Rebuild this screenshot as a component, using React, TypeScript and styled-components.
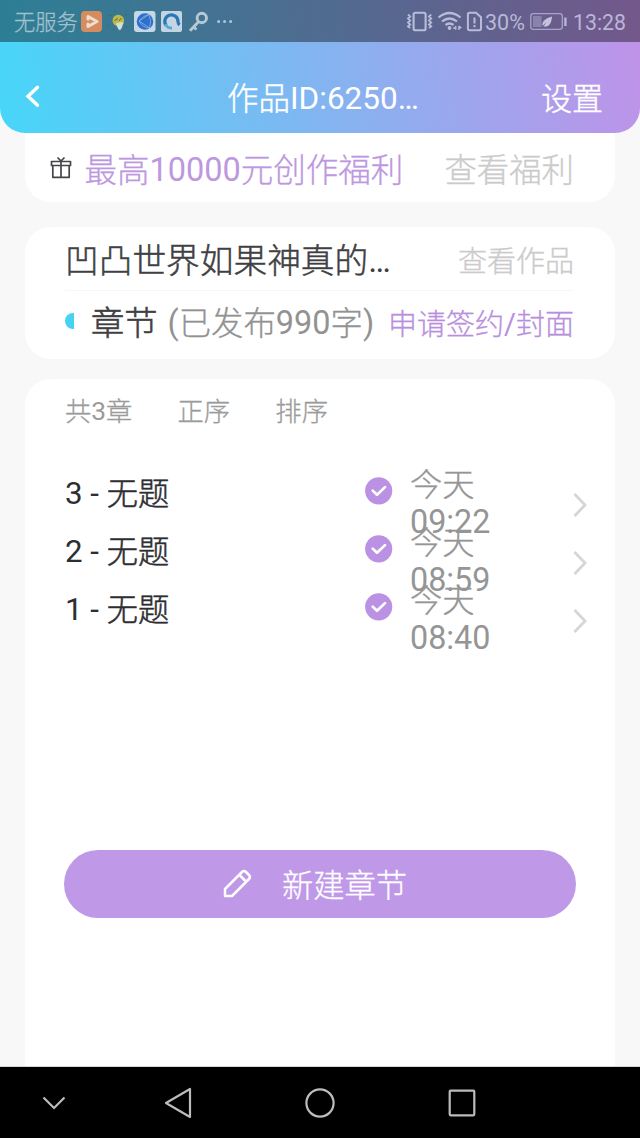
import React from 'react';
import styled, { createGlobalStyle } from 'styled-components';

const GlobalStyle = createGlobalStyle`
  * { box-sizing: border-box; }
  body {
    margin: 0;
    background: #f8f8f8;
    font-family: Roboto, 'Noto Sans CJK SC', sans-serif;
    font-weight: 300;
  }
  svg { display: block; flex: none; }
`;

const Screen = styled.div`
  width: 640px;
  height: 1138px;
  display: flex;
  flex-direction: column;
  overflow: hidden;
  background: #f8f8f8;
`;

const Label = styled.span<{ $size: number; $color: string; $stroke?: number; $line?: number; $drop?: number; $indent?: number }>`
  font-size: ${p => p.$size}px;
  line-height: ${p => p.$line ?? 40}px;
  color: ${p => p.$color};
  padding-top: ${p => p.$drop ?? 0}px;
  margin-left: ${p => p.$indent ?? 0}px;
  -webkit-text-stroke: ${p => p.$stroke ?? 0.3}px currentColor;
  white-space: nowrap;
  flex: none;
`;

const Latin = styled.span`
  font-weight: 400;
  line-height: 0;
  vertical-align: 1px;
  -webkit-text-stroke: 0;
`;

// Latin runs use the regular weight, Chinese runs a slightly thickened light weight.
const mixRuns = (text: string) =>
  text
    .split(/([\x20-\x7e…]+)/)
    .filter(Boolean)
    .map((run, i) => (/^[\x20-\x7e…]/.test(run) ? <Latin key={i}>{run}</Latin> : run));

type TextProps = React.ComponentProps<typeof Label> & { children: string };
const Text = ({ children, ...rest }: TextProps) => <Label {...rest}>{mixRuns(children)}</Label>;

const Header = styled.header`
  height: 133px;
  flex: none;
  border-radius: 0 0 25px 25px;
  overflow: hidden;
  background: linear-gradient(80deg, #47d6f9, #c092e8);
`;

const StatusBar = styled.div`
  height: 42px;
  padding: 0 14px;
  display: flex;
  align-items: center;
  justify-content: space-between;
  background: rgba(0, 0, 0, 0.4);
`;

const StatusGroup = styled.div`
  display: flex;
  align-items: center;
`;

const TitleBar = styled.div`
  height: 91px;
  display: grid;
  grid-template-columns: 227px 1fr 99px;
  align-items: center;
  padding-top: 20px;
`;

const BackButton = styled.button`
  border: 0;
  background: none;
  padding: 0 0 4px 25px;
`;

const Card = styled.section`
  margin: 0 25px;
  background: #fff;
  flex: none;
`;

const BenefitCard = styled(Card)`
  height: 68.5px;
  padding: 4px 41px 0 25px;
  border-radius: 0 0 26px 26px;
  display: flex;
  align-items: center;
`;

const WorkCard = styled(Card)`
  height: 132px;
  margin-top: 25px;
  padding: 0 41px 0 40px;
  border-radius: 26px;
`;

const WorkRow = styled.div<{ $height: number }>`
  height: ${p => p.$height}px;
  display: flex;
  align-items: center;
`;

const Divider = styled.div`
  height: 1px;
  background: #f7f7f7;
`;

const Spacer = styled.div`
  flex: 1;
`;

const HalfDot = styled.i`
  width: 9px;
  height: 16px;
  margin: 0 17px 3px 0;
  border-radius: 8px 0 0 8px;
  background: #45d3f1;
`;

const ChapterCard = styled(Card)`
  height: 687.5px;
  margin-top: 20px;
  padding: 13.5px 25px 0 40px;
  border-radius: 26px 26px 0 0;
`;

const SortBar = styled.div`
  display: flex;
  gap: 45.2px;
  margin-bottom: 34px;
`;

const ChapterRow = styled.div`
  height: 58px;
  display: grid;
  grid-template-columns: 300px 45px 1fr 18.5px;
  align-items: start;
`;

const CheckCell = styled.div`
  padding-top: 11px;
`;

const ArrowCell = styled.div`
  padding-top: 25.5px;
`;

const Time = styled.span`
  width: 90px;
  font-size: 32.3px;
  line-height: 37px;
  padding-top: 1px;
  color: #959595;
  -webkit-text-stroke: 0.3px currentColor;
  ${Latin} { vertical-align: 0; }
`;

const CreateButton = styled.button`
  width: 512px;
  height: 68px;
  margin: 210px 0 0 -1px;
  padding: 0 11px 0 0;
  border: 0;
  border-radius: 34px;
  background: #bf98e8;
  font-family: inherit;
  font-weight: 300;
  display: flex;
  align-items: center;
  justify-content: center;
  gap: 30px;
`;

const NavBar = styled.nav`
  height: 72px;
  flex: none;
  background: #000;
  border-top: 1px solid #d4d4d4;
  display: flex;
  align-items: center;
`;

const NavItem = styled.div<{ $width: number }>`
  width: ${p => p.$width}px;
  display: flex;
  justify-content: center;
`;

const StatusIcons = () => (
  <svg width="160" height="42" viewBox="78 0 160 42" fill="none">
    <rect x="81" y="11" width="21" height="21" rx="4" fill="#d58d60" />
    <path d="M88 19V16.500L97 21.500L88 26.500V24" stroke="#f1ddcf" strokeWidth="3" strokeLinejoin="round" strokeLinecap="round" />
    <circle cx="118.300" cy="20.500" r="5.800" fill="#bfb94a" />
    <path d="M114.500 20.500L118 18.500M119 21L121.500 18" stroke="#5d6c3c" />
    <path d="M116 23.500C119 22.500 122 21.500 123.500 23C122.500 25 122 29 119.700 30.300C117.500 29 117 26 116 23.500Z" fill="#d7ded4" />
    <path d="M108.500 25.500h1M110 15.500h1M115 11.500h1M125 15h1M113 29.500h1M126 27h1" stroke="#415d55" />
    <rect x="134" y="11" width="21.500" height="21" rx="3" fill="#c5d8e6" />
    <circle cx="145" cy="21.500" r="8.300" fill="#2e70cb" />
    <path d="M139 21L149 14.500M139 21L149.500 28M149 14.500Q152 21 149.500 28M139 21Q144 15 149 14.500M139 21Q143 28 149.500 28" stroke="#a9c8e9" strokeWidth=".6" />
    <rect x="161" y="11" width="21" height="21" rx="2" fill="#c3d5e2" />
    <path d="M166.200 25.500A6.600 6.600 0 1 1 178 21.500Q178 23.500 179.500 25" stroke="#2978b5" strokeWidth="3.200" />
    <path d="M165.500 24A6.600 6.600 0 0 0 172 28" stroke="#55a8d5" strokeWidth="2.800" />
    <circle cx="201.800" cy="18" r="4.700" stroke="#b5cad5" strokeWidth="2.900" />
    <path d="M198.500 21.800L190 30.800M193.500 27L196.500 29.500" stroke="#b5cad5" strokeWidth="2.900" />
    <g fill="#aec6d5">
      <circle cx="218.600" cy="21.600" r="1.500" />
      <circle cx="224.600" cy="21.600" r="1.500" />
      <circle cx="230.600" cy="21.600" r="1.500" />
    </g>
  </svg>
);

const SignalIcons = () => (
  <svg width="80" height="42" viewBox="405 0 80 42" fill="none" stroke="#b7bcd9">
    <rect x="413.600" y="12.700" width="12" height="17.500" rx="1.800" strokeWidth="2.100" />
    <path d="M408 14.500l2.200 2-2.200 2 2.200 2-2.200 2 2.200 2-2.200 2 2.200 1.500M431.200 14.500l-2.200 2 2.200 2-2.200 2 2.200 2-2.200 2 2.200 2-2.200 1.500" strokeWidth="1.800" />
    <path d="M438.500 17.500Q449.500 8.500 460.500 17.500M442 21.500Q449.500 15.500 457 21.500M445.500 25Q449.500 22 453.500 25" strokeWidth="2.200" />
    <circle cx="449.500" cy="28" r="1.900" fill="#b7bcd9" stroke="none" />
    <path d="M455.800 26v4M458.800 26v4" strokeWidth="1.200" />
    <path d="M452.500 28.500l3-2.500v3zM462 27.500l-3-2v4z" fill="#b7bcd9" stroke="none" />
    <path d="M469.500 12.800H476L481 17.300V28.500Q481 30.200 479.300 30.200H469.500Q467.900 30.200 467.900 28.500V14.500Q467.900 12.800 469.500 12.800Z" strokeWidth="2" />
    <path d="M474.500 17.500v6M474.500 25v2.200" strokeWidth="2" />
  </svg>
);

const BatteryIcon = () => (
  <svg width="48" height="42" viewBox="525 0 48 42" fill="none">
    <rect x="530.800" y="13.700" width="31.500" height="15.600" rx="2.500" stroke="#a9a5c8" strokeWidth="1.300" />
    <rect x="533" y="16" width="8.500" height="11" fill="#8983ad" />
    <path d="M565.400 17.500v8.500" stroke="#bab5d8" strokeWidth="2.400" />
    <path d="M552 16.500C546 18.500 541.800 20.500 542.500 26L546.500 22L543.500 26.500C550 27.500 551.500 22 552 16.500Z" fill="#c7c3df" />
  </svg>
);

const GiftIcon = () => (
  <svg width="22" height="26" viewBox="0 0 22 26" fill="none" stroke="#45454a" strokeWidth="1.700">
    <path d="M1.500 5.500H20.500V9.500H1.500ZM2.800 9.500V21.300H19.200V9.500M11 5.500V21.300M7.500 1.500L11 5L14.500 1.500" strokeLinejoin="round" />
  </svg>
);

const CheckIcon = () => (
  <svg width="28" height="28" viewBox="0 0 28 28" fill="none">
    <circle cx="13.700" cy="13.800" r="13.600" fill="#bb91e4" />
    <path d="M7.700 13.600L12 17.800L20 10.100" stroke="#fff" strokeWidth="2.700" strokeLinecap="round" strokeLinejoin="round" />
  </svg>
);

const chapters = [
  { id: 3, title: '无题', time: '09:22' },
  { id: 2, title: '无题', time: '08:59' },
  { id: 1, title: '无题', time: '08:40' },
];

export default function App() {
  return (
    <>
      <GlobalStyle />
      <Screen>
        <Header>
          <StatusBar>
            <StatusGroup>
              <Text $size={21.3} $color="#a3c1cd" $drop={4}>无服务</Text>
              <StatusIcons />
            </StatusGroup>
            <StatusGroup>
              <SignalIcons />
              <Text $size={21.5} $color="#b7b9d7" $drop={5}>30%</Text>
              <BatteryIcon />
              <Text $size={21.3} $color="#bdb5d8" $drop={5}>13:28</Text>
            </StatusGroup>
          </StatusBar>
          <TitleBar>
            <BackButton aria-label="返回">
              <svg width="16" height="24" viewBox="0 0 16 24" fill="none">
                <path d="M12.500 3.200L3 12.200L12.500 21.200" stroke="#fff" strokeWidth="3.400" strokeLinecap="round" />
              </svg>
            </BackButton>
            <Text $size={31.5} $color="#fff" $stroke={0.4} $drop={4}>作品ID:6250…</Text>
            <Text $size={31} $color="#fff" $stroke={0.4} $drop={4}>设置</Text>
          </TitleBar>
        </Header>

        <BenefitCard>
          <GiftIcon />
          <Text $size={32.5} $color="#bd97df" $indent={12.5} $drop={4}>最高10000元创作福利</Text>
          <Spacer />
          <Text $size={32.4} $color="#cbcbcb" $drop={4}>查看福利</Text>
        </BenefitCard>

        <WorkCard>
          <WorkRow $height={63}>
            <Text $size={33.7} $color="#3f3f44" $stroke={0.5} $drop={8}>凹凸世界如果神真的…</Text>
            <Spacer />
            <Text $size={29} $color="#cbcbcb" $drop={7}>查看作品</Text>
          </WorkRow>
          <Divider />
          <WorkRow $height={64}>
            <HalfDot />
            <Text $size={33.3} $color="#3f3f44" $stroke={0.6} $drop={3}>章节</Text>
            <Text $size={32.4} $color="#929292" $indent={10} $drop={3}>(已发布990字)</Text>
            <Spacer />
            <Text $size={29} $color="#b98fdd" $drop={4}>申请签约/封面</Text>
          </WorkRow>
        </WorkCard>

        <ChapterCard>
          <SortBar>
            <Text $size={26.3} $color="#9b9b9b">共3章</Text>
            <Text $size={26.3} $color="#9b9b9b">正序</Text>
            <Text $size={26.3} $color="#9b9b9b">排序</Text>
          </SortBar>
          {chapters.map(chapter => (
            <ChapterRow key={chapter.id}>
              <Text $size={31.3} $color="#2d2e33" $stroke={0.5} $line={54} $drop={1.5}>{`${chapter.id} - ${chapter.title}`}</Text>
              <CheckCell><CheckIcon /></CheckCell>
              <Time>{mixRuns(`今天 ${chapter.time}`)}</Time>
              <ArrowCell>
                <svg width="18" height="26" viewBox="0 0 18 26" fill="none">
                  <path d="M2.500 2L13 13L2.500 24" stroke="#d6d6d6" strokeWidth="2.800" />
                </svg>
              </ArrowCell>
            </ChapterRow>
          ))}
          <CreateButton>
            <svg width="30" height="30" viewBox="0 0 30 30" fill="none" stroke="#fff" strokeWidth="2.500" strokeLinejoin="round">
              <path d="M3 27V20L20 3Q22 1 24 3L27 6Q29 8 27 10L10 27ZM17.500 6L24 12.500" />
            </svg>
            <Text $size={31.3} $color="#fff" $drop={5}>新建章节</Text>
          </CreateButton>
        </ChapterCard>

        <NavBar>
          <NavItem $width={107}>
            <svg width="24" height="14" viewBox="0 0 24 14" fill="none" stroke="#bcbcbc" strokeWidth="2.200">
              <path d="M1.500 1.500L12 12L22.500 1.500" />
            </svg>
          </NavItem>
          <NavItem $width={142}>
            <svg width="28" height="32" viewBox="0 0 28 32" fill="none" stroke="#bcbcbc" strokeWidth="2.200" strokeLinejoin="round">
              <path d="M26 2V30L2 16Z" />
            </svg>
          </NavItem>
          <NavItem $width={142}>
            <svg width="30" height="30" viewBox="0 0 30 30" fill="none" stroke="#bcbcbc" strokeWidth="2.200">
              <circle cx="15" cy="15" r="13.600" />
            </svg>
          </NavItem>
          <NavItem $width={142}>
            <svg width="28" height="28" viewBox="0 0 28 28" fill="none" stroke="#bcbcbc" strokeWidth="2.200">
              <rect x="1.700" y="1.700" width="24.600" height="24.600" rx="1" />
            </svg>
          </NavItem>
        </NavBar>
      </Screen>
    </>
  );
}
